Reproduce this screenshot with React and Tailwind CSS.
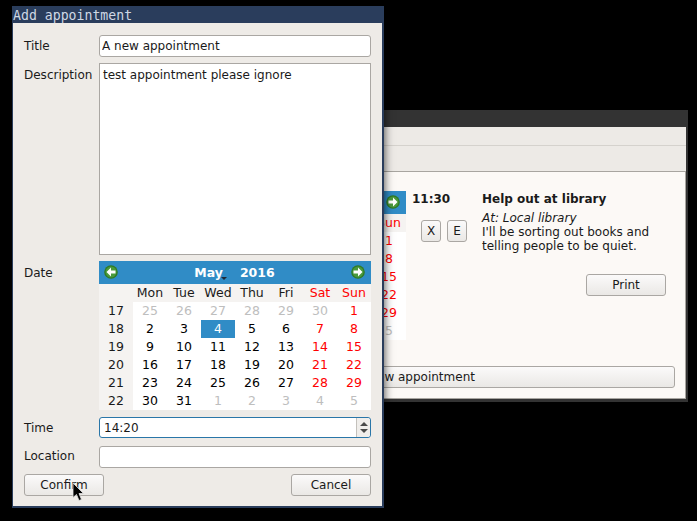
import React from 'react';

const font = { fontFamily: '"DejaVu Sans", sans-serif' };

const WEEKS = [
  [17, [25, 26, 27, 28, 29, 30, 1]],
  [18, [2, 3, 4, 5, 6, 7, 8]],
  [19, [9, 10, 11, 12, 13, 14, 15]],
  [20, [16, 17, 18, 19, 20, 21, 22]],
  [21, [23, 24, 25, 26, 27, 28, 29]],
  [22, [30, 31, 1, 2, 3, 4, 5]],
];

const DAYS = ['Mon', 'Tue', 'Wed', 'Thu', 'Fri', 'Sat', 'Sun'];

const ArrowIcon = ({ left }) => (
  <svg width="14" height="14" viewBox="0 0 14 14" className={left ? 'rotate-180' : ''}>
    <circle cx="7" cy="7" r="6.8" fill="#2f7a25" />
    <circle cx="7" cy="7" r="5.5" fill="#4a9a3c" />
    <path d="M2.5 5.5H7V2.5L11.5 7L7 11.5V8.5H2.5Z" fill="#ffffff" />
  </svg>
);

const Calendar = () => (
  <div className="w-[272px] h-[149px] shrink-0 text-[12.5px] leading-[18px]">
    <div className="h-[23px] bg-[#308cc6] flex items-center justify-between pl-[5px] pr-[6px] pb-[2px]">
      <ArrowIcon left />
      <div className="flex font-bold text-white gap-[17px] pt-[2px]">
        <span className="relative">
          May
          <span className="absolute left-[27px] top-[13px] w-0 h-0 border-x-[3px] border-t-[3px] border-x-transparent border-t-[#1f2937]" />
        </span>
        <span>2016</span>
      </div>
      <ArrowIcon />
    </div>
    <div className="grid grid-cols-8 bg-[#f5f3f1]">
      <div />
      {DAYS.map((d, i) => (
        <div key={d} className={`text-center ${i > 4 ? 'text-[#ff0000]' : 'text-[#1a1a1a]'}`}>{d}</div>
      ))}
    </div>
    {WEEKS.map(([week, days], w) => (
      <div key={week} className="grid grid-cols-8 bg-white">
        <div className="text-center bg-[#f5f3f1] text-[#1a1a1a]">{week}</div>
        {days.map((d, i) => {
          const outside = (w === 0 && d > 20) || (w === 5 && d < 20);
          const selected = w === 1 && d === 4;
          let color = 'text-black';
          if (i > 4) color = 'text-[#ff0000]';
          if (outside) color = 'text-[#bebebe]';
          if (selected) color = 'bg-[#308cc6] text-white';
          return <div key={i} className={`text-center ${color}`}>{d}</div>;
        })}
      </div>
    ))}
  </div>
);

const Button = ({ children, className = '' }) => (
  <button className={`h-[22px] rounded-[3px] border border-[#aaa7a3] bg-gradient-to-b from-[#fbfafa] to-[#eae8e5] text-[12px] text-[#1a1a1a] ${className}`}>
    {children}
  </button>
);

const BackWindow = () => (
  <div className="absolute left-[122px] top-[110px] w-[566px] h-[292px] bg-[#333333] flex flex-col pr-[2px] pb-[3px]">
    <div className="h-[17px] shrink-0" />
    <div className="h-[19px] shrink-0 bg-[#edeae6] border-b border-[#d5d2cd]" />
    <div className="h-[25px] shrink-0 bg-[#edeae6]" />
    <div className="flex-1 bg-[#fcf9f6] border border-[#a8a5a0] flex flex-col">
      <div className="flex pt-[19px] pl-[11px] flex-1 text-[12px]">
        <Calendar />
        <div className="ml-[6px] w-[70px] flex flex-col font-bold text-[#1a1a1a] leading-[16px]">
          11:30
          <div className="flex gap-[6px] ml-[9px] mt-[13px] font-normal">
            <Button className="w-[20px]">X</Button>
            <Button className="w-[20px]">E</Button>
          </div>
        </div>
        <div className="w-[184px] text-[#1a1a1a] leading-[14px] flex flex-col">
          <div className="font-bold leading-[16px] mb-[4px]">Help out at library</div>
          <div className="italic">At: Local library</div>
          <div>I'll be sorting out books and</div>
          <div>telling people to be quiet.</div>
          <Button className="w-[80px] self-end mt-[21px]">Print</Button>
        </div>
      </div>
      <Button className="ml-[45px] mr-[10px] mb-[10px] shrink-0">New appointment</Button>
    </div>
  </div>
);

const fieldClass = 'w-[272px] h-[22px] rounded-[3px] border border-[#aaa7a3] bg-white px-[2px] text-[12px] text-[#1a1a1a] outline-none';

const Field = ({ label, labelClass = 'leading-[22px]', children }) => (
  <div className="flex items-start">
    <div className={`w-[75px] shrink-0 text-[12px] text-[#1a1a1a] ${labelClass}`}>{label}</div>
    {children}
  </div>
);

const Dialog = () => (
  <div className="absolute left-[12px] top-[6px] w-[372px] h-[502px] bg-[#2a3d5c] p-[1px] pr-[2px] shadow-[0_0_9px_rgba(0,0,0,0.75)] flex flex-col">
    <div className="h-[16px] shrink-0 text-[13.2px] leading-[17px] text-[#cfd8e4]" style={{ fontFamily: '"DejaVu Sans Mono", monospace' }}>
      Add appointment
    </div>
    <div className="flex-1 bg-[#eeebe7] px-[11px] pt-[12px] flex flex-col gap-[6px] mb-[1px]">
      <Field label="Title">
        <input readOnly value="A new appointment" className={fieldClass} />
      </Field>
      <Field label="Description" labelClass="leading-[24px]">
        <textarea readOnly value="test appointment please ignore" className="w-[272px] h-[192px] border border-[#aaa7a3] bg-white px-[3px] py-[3px] text-[12px] leading-[16px] text-[#1a1a1a] outline-none resize-none" />
      </Field>
      <Field label="Date" labelClass="leading-[24px]">
        <Calendar />
      </Field>
      <div className="mt-[1px]">
        <Field label="Time">
          <div className="relative w-[272px] h-[21px] rounded-[3px] border border-[#2a76a8] bg-white flex items-center">
            <span className="pl-[4px] text-[12px] text-[#1a1a1a]">14:20</span>
            <div className="absolute right-0 top-0 bottom-0 w-[14px] border-l border-[#c4c1bc] bg-[#f0eeeb] flex flex-col items-center justify-center gap-[3px] rounded-r-[3px]">
              <span className="w-0 h-0 border-x-[4px] border-b-[4px] border-x-transparent border-b-[#4a4a4a]" />
              <span className="w-0 h-0 border-x-[4px] border-t-[4px] border-x-transparent border-t-[#4a4a4a]" />
            </div>
          </div>
        </Field>
      </div>
      <div className="mt-[1px]">
        <Field label="Location" labelClass="leading-[20px]">
          <input readOnly value="" className={fieldClass} />
        </Field>
      </div>
      <div className="flex justify-between">
        <Button className="w-[80px] border-[#2a76a8] to-[#dce5ea]">Confirm</Button>
        <Button className="w-[80px]">Cancel</Button>
      </div>
    </div>
  </div>
);

const Cursor = () => (
  <svg className="absolute left-[72px] top-[482px]" width="13" height="20" viewBox="0 0 13 20">
    <path d="M1 1V15.5L4.5 12.5L7 18.5L9.5 17.5L7 11.5H11.5Z" fill="#000000" stroke="#e5e5e5" strokeWidth="0.8" />
  </svg>
);

export default function App() {
  return (
    <div className="relative w-[697px] h-[521px] bg-black overflow-hidden" style={font}>
      <BackWindow />
      <Dialog />
      <Cursor />
    </div>
  );
}
